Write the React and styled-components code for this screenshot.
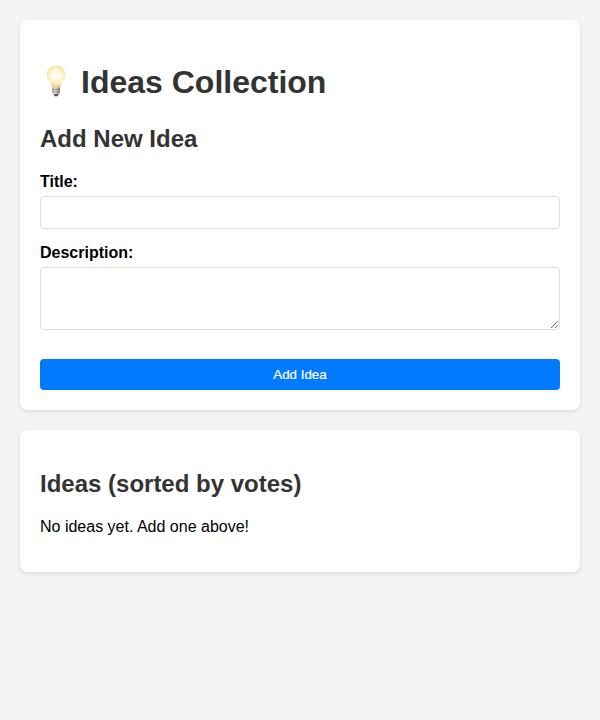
import React from 'react';
import styled, { createGlobalStyle } from 'styled-components';

const GlobalStyle = createGlobalStyle`
  body {
    margin: 0;
    padding: 20px;
    background: #f4f4f4;
    font-family: "Liberation Sans", Arial, sans-serif;
  }
`;

const Card = styled.section`
  background: #fff;
  padding: 20px;
  margin-bottom: 20px;
  border-radius: 8px;
  box-shadow: 0 2px 4px rgba(0, 0, 0, 0.1);
`;

const Title = styled.h1`
  display: flex;
  align-items: center;
  gap: 9px;
  height: 42px;
  line-height: 42px;
  color: #333;
`;

const Heading = styled.h2`
  color: #333;
`;

const Bulb = styled.svg`
  flex: none;
  width: 32px;
  height: 42px;
`;

const Field = styled.div`
  margin-bottom: 15px;
`;

const Label = styled.label`
  display: block;
  margin-bottom: 5px;
  font-weight: bold;
`;

const Input = styled.input`
  width: 100%;
  padding: 8px;
  border: 1px solid #ddd;
  border-radius: 4px;
  box-sizing: border-box;
`;

const TextArea = styled.textarea`
  width: 100%;
  padding: 8px;
  border: 1px solid #ddd;
  border-radius: 4px;
  box-sizing: border-box;
`;

const Button = styled.button`
  width: 100%;
  padding: 8px;
  border: none;
  border-radius: 4px;
  background: #007bff;
  color: #fff;
  cursor: pointer;
  margin-top: 10px;
  -webkit-text-stroke: 0.2px #fff;
`;

function LightBulb() {
  return (
    <Bulb viewBox="0 0 32 42" aria-hidden="true">
      <defs>
        <radialGradient id="glass" gradientUnits="userSpaceOnUse" cx="16.2" cy="14.5" r="11.5">
          <stop offset="0" stopColor="#fffefa" />
          <stop offset="0.4" stopColor="#fff9e6" />
          <stop offset="0.7" stopColor="#fdeebb" />
          <stop offset="0.88" stopColor="#f7da86" />
          <stop offset="1" stopColor="#efcd78" />
        </radialGradient>
        <linearGradient id="base" x1="0" x2="1">
          <stop offset="0" stopColor="#97938a" />
          <stop offset="0.35" stopColor="#e5e3df" />
          <stop offset="0.65" stopColor="#b5b2ad" />
          <stop offset="1" stopColor="#77736d" />
        </linearGradient>
      </defs>
      <path
        d="M16.100 4.500C10.800 4.500 7 8.400 7 13.400c0 3.600 1.800 5.600 3.200 8 1.100 1.900 1.600 3.500 2 5.200h7.800c.4-1.700.9-3.300 2-5.200 1.400-2.400 3.200-4.400 3.200-8 0-5-3.800-8.900-9.100-8.900z"
        fill="url(#glass)"
      />
      <path d="M12.200 26.600h7.800v5.200l-1.400 1.500h-5l-1.400-1.500z" fill="url(#base)" />
      <path d="M12.400 28.500h7.400M12.500 30.700h7.200" stroke="#858078" strokeWidth=".6" />
      <path d="M13.500 33h5.200l-1.200 2.200h-2.800z" fill="#55524e" />
    </Bulb>
  );
}

export default function App() {
  return (
    <>
      <GlobalStyle />
      <Card>
        <Title><LightBulb />Ideas Collection</Title>
        <Heading>Add New Idea</Heading>
        <form onSubmit={(e) => e.preventDefault()}>
          <Field>
            <Label htmlFor="title">Title:</Label>
            <Input id="title" type="text" />
          </Field>
          <Field>
            <Label htmlFor="description">Description:</Label>
            <TextArea id="description" rows={3} />
          </Field>
          <Button type="submit">Add Idea</Button>
        </form>
      </Card>
      <Card>
        <Heading>Ideas (sorted by votes)</Heading>
        <p>No ideas yet. Add one above!</p>
      </Card>
    </>
  );
}
